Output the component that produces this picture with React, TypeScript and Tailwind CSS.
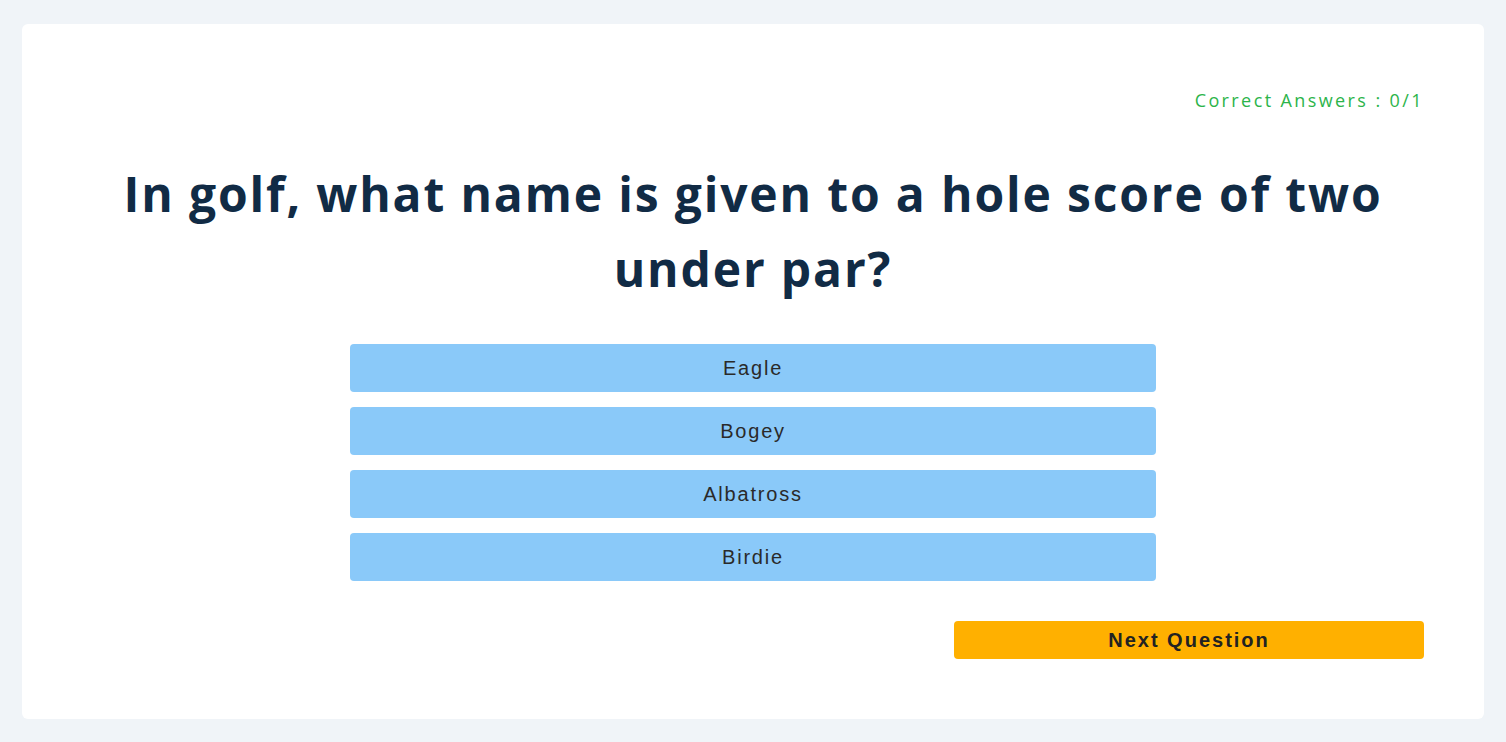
import React from "react";

const answers = ["Eagle", "Bogey", "Albatross", "Birdie"];

export default function App() {
  return (
    <div className="min-h-screen bg-[#f0f4f8] px-[22px] pt-[24px] pb-[24px]">
      <div className="bg-white rounded-[6px] px-[60px] pt-[60px] pb-[60px]">
        <div
          className="text-right text-[18px] leading-[32px] tracking-[2.4px] text-[#2cb44a]"
          style={{ fontFamily: '"Open Sans", "Noto Sans", sans-serif' }}
        >
          Correct Answers : 0/1
        </div>
        <h1
          className="mt-[40px] text-center text-[48px] leading-[75px] font-bold tracking-[1.85px] text-[#112b45] px-[30px]"
          style={{ fontFamily: '"Open Sans", "Noto Sans", sans-serif' }}
        >
          In golf, what name is given to a hole score of two under par?
        </h1>
        <div
          className="mx-auto mt-[38px] w-[806px] flex flex-col gap-[15px]"
          style={{ fontFamily: '"Liberation Sans", Arial, sans-serif' }}
        >
          {answers.map((a) => (
            <button
              key={a}
              className="h-[48px] w-full rounded-[4px] bg-[#8ac9f9] text-[20px] tracking-[1.8px] text-[#2a2a2a]"
            >
              {a}
            </button>
          ))}
        </div>
        <div className="mt-[40px] flex justify-end">
          <button
            className="h-[38px] w-[470px] rounded-[4px] bg-[#ffb000] text-[20px] font-bold tracking-[2px] text-[#222]"
            style={{ fontFamily: '"Liberation Sans", Arial, sans-serif' }}
          >
            Next Question
          </button>
        </div>
      </div>
    </div>
  );
}
